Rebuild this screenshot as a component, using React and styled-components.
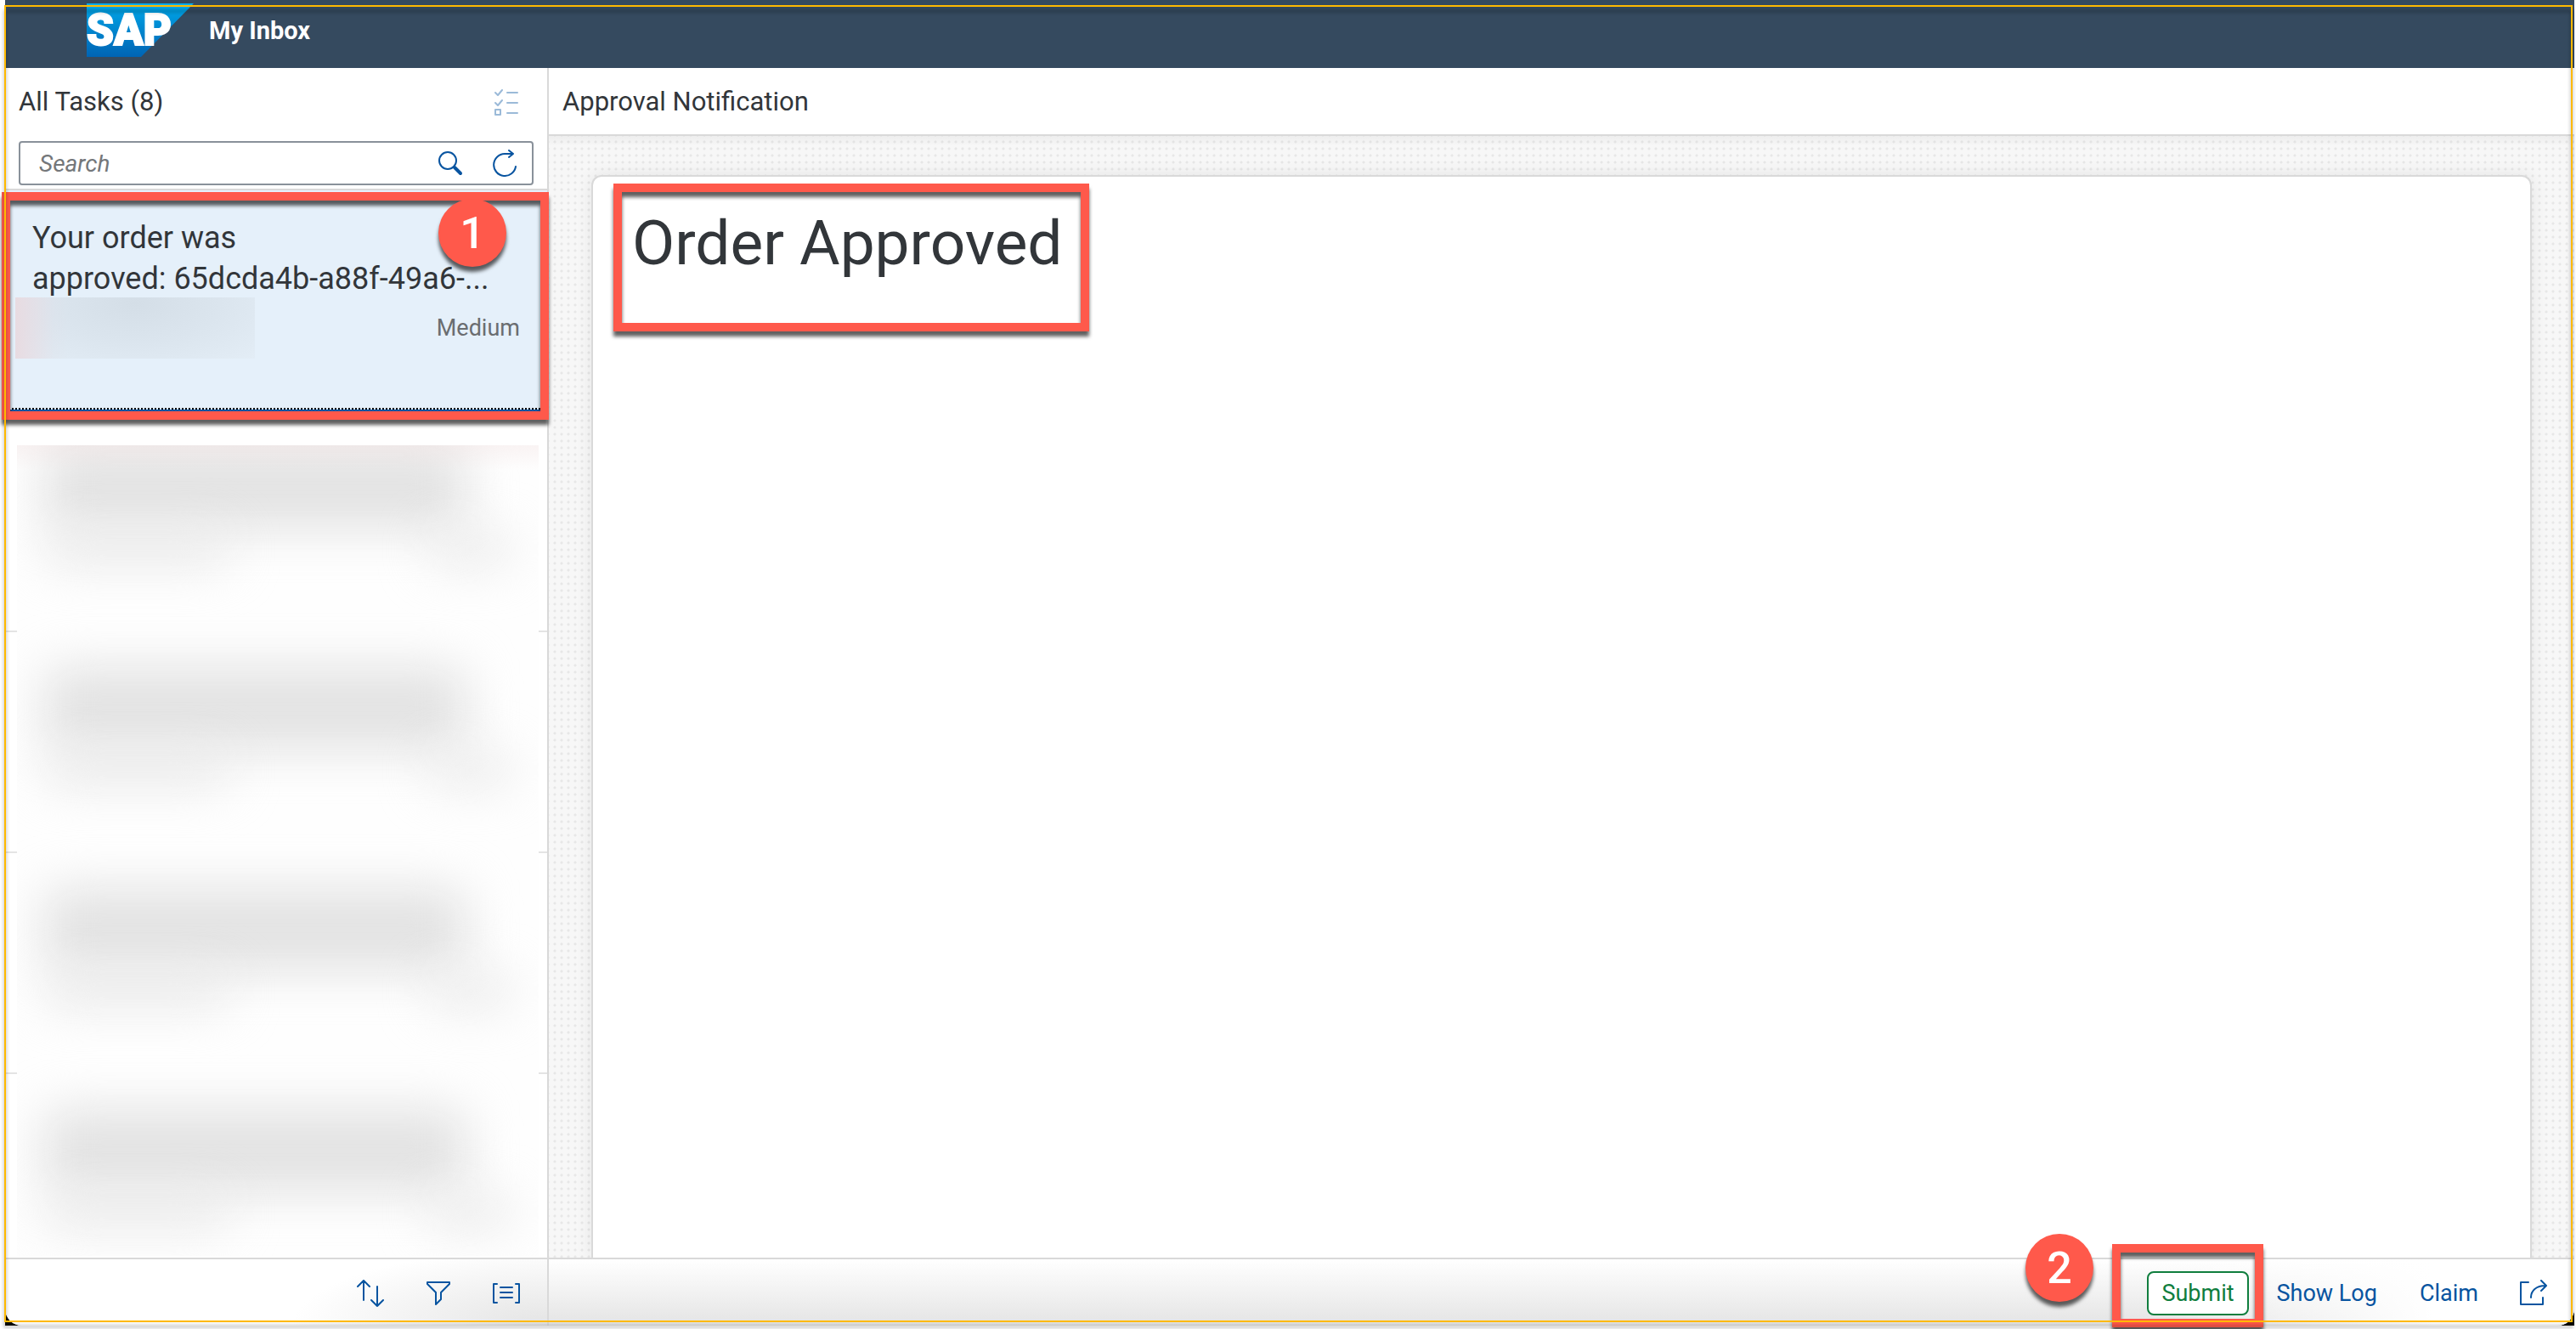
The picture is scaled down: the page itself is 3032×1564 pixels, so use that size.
import React from "react";
import styled, { createGlobalStyle } from "styled-components";

const colors = {
  shell: "#354a5f",
  text: "#32363a",
  muted: "#6a6d70",
  line: "#d9d9d9",
  link: "#0854a0",
  positive: "#107e3e",
  mark: "#ff594b",
  frame: "#ffb900",
};

const Global = createGlobalStyle`
  *, *::before, *::after { box-sizing: border-box; }
  body { margin: 0; background: #fff; }
  h1, h2, p, ul { margin: 0; padding: 0; font-weight: 400; }
  button, input { font: inherit; }
`;

const Page = styled.div`
  position: relative;
  height: 100vh;
  padding: 0 2px 4px 6px;
  display: flex;
  font-family: Roboto, "Liberation Sans", sans-serif;
  color: ${colors.text};
`;

const Backdrop = styled.div`
  flex: 1;
  display: flex;
  min-width: 0;
  background: linear-gradient(#fff 50%, #0a0a05 50%);
`;

const Shell = styled.div`
  flex: 1;
  min-width: 0;
  display: flex;
  flex-direction: column;
  border-radius: 0 0 20px 20px;
  overflow: hidden;
  background: #fff;
`;

const ShellBar = styled.header`
  flex: none;
  height: 80px;
  display: flex;
  align-items: flex-start;
  gap: 18px;
  padding: 4px 96px;
  background: ${colors.shell};
  color: #fff;
`;

const AppTitle = styled.h1`
  font-size: 29px;
  line-height: 64px;
  font-weight: 700;
`;

const Columns = styled.div`
  flex: 1;
  min-height: 0;
  display: flex;
`;

const Master = styled.aside`
  position: relative;
  width: 640px;
  flex: none;
  display: flex;
  flex-direction: column;
  border-right: 2px solid ${colors.line};
`;

const MasterHead = styled.div`
  flex: none;
  height: 144px;
  padding: 0 10px 4px 16px;
  border-bottom: 2px solid ${colors.line};
`;

const MasterTitle = styled.div`
  display: flex;
  justify-content: space-between;
  align-items: center;
  height: 80px;
  margin-bottom: 6px;
  padding-right: 20px;
`;

const Heading = styled.h2`
  font-size: 31px;
  line-height: 80px;
`;

const IconButton = styled.button`
  display: flex;
  align-items: center;
  justify-content: center;
  flex: none;
  width: ${(p) => (p.$wide ? "64px" : "36px")};
  height: 36px;
  padding: 0;
  border: 0;
  background: none;
  color: ${colors.link};
  opacity: ${(p) => (p.disabled ? 0.4 : 1)};
`;

const SearchBox = styled.label`
  display: flex;
  align-items: center;
  gap: 28px;
  height: 52px;
  margin-right: 6px;
  padding: 0 14px 0 22px;
  border: 2px solid #89919a;
  border-radius: 4px;
`;

const SearchInput = styled.input`
  flex: 1;
  min-width: 0;
  padding: 0;
  border: 0;
  outline: 0;
  background: none;
  font-size: 28px;
  color: ${colors.text};
  &::placeholder { color: #74777a; font-style: italic; opacity: 1; }
`;

const TaskList = styled.ul`
  position: relative;
  flex: 1;
  min-height: 0;
  overflow: hidden;
  list-style: none;
`;

const Task = styled.li`
  height: 260px;
  padding: 32px 32px 0;
  border-bottom: 2px solid ${(p) => (p.$selected ? colors.link : "#e4e4e4")};
  background: ${(p) => (p.$selected ? "#e5f0fa" : "#fff")};
  display: flex;
  flex-direction: column;
`;

const SelectedTask = styled(Task)`
  position: relative;
  &::after {
    content: "";
    position: absolute;
    inset: auto 0 0 0;
    border-bottom: 2px dotted #000;
  }
`;

const TaskTitle = styled.p`
  font-size: 36px;
  line-height: 48px;
`;

const TaskMeta = styled.div`
  display: flex;
  justify-content: space-between;
  margin: -2px 0 0 -20px;
`;

const Redacted = styled.div`
  width: 282px;
  height: 72px;
  background:
    linear-gradient(90deg, #e8dbe1, #e0e0e840 16%, transparent 22%),
    radial-gradient(ellipse at 50% 10%, #d4dee7, #dbe5ee 50%, #e3edf6);
`;

const Priority = styled.span`
  font-size: 27px;
  line-height: 72px;
  color: ${colors.muted};
`;

const Veil = styled.div`
  position: absolute;
  inset: 300px 10px 2px 14px;
  overflow: hidden;
  background: #fefefe;
  &::after {
    content: "";
    position: absolute;
    inset: 0 0 auto 0;
    height: 30px;
    background: linear-gradient(#e6c8c833, #e6c8c800);
  }
`;

const Smudge = styled.div`
  height: 260px;
  display: grid;
  grid-template-columns: 370px 1fr;
  grid-template-rows: 100px 36px;
  align-content: start;
  padding: 0 30px 0 30px;
  row-gap: 4px;
`;

const Blot = styled.i`
  grid-column: ${(p) => p.$col};
  justify-self: ${(p) => p.$side || "stretch"};
  width: ${(p) => p.$w};
  border-radius: 24px;
  background: ${(p) => p.$tone};
  filter: blur(28px);
`;

const FooterBar = styled.footer`
  flex: none;
  height: 80px;
  display: flex;
  align-items: center;
  justify-content: flex-end;
  border-top: 2px solid ${colors.line};
`;

const MasterFooter = styled(FooterBar)`
  gap: 44px;
  padding: 2px 30px 0 0;
  background: radial-gradient(ellipse 300px 90px at 100% 100%, #e4e4e4, #fff);
`;

const Detail = styled.main`
  flex: 1;
  min-width: 0;
  display: flex;
  flex-direction: column;
`;

const DetailHead = styled.div`
  flex: none;
  height: 80px;
  padding: 0 16px;
  border-bottom: 2px solid ${colors.line};
`;

const Canvas = styled.div`
  flex: 1;
  min-height: 0;
  display: flex;
  padding: 46px 50px 0;
  overflow: hidden;
  background:
    linear-gradient(#0000000a, transparent 12px),
    radial-gradient(#e7e7e7 1px, transparent 2px) 3px 3px / 8px 8px,
    #f7f7f7;
`;

const Card = styled.section`
  flex: 1;
  border: 2px solid ${colors.line};
  border-bottom: 0;
  border-radius: 12px 12px 0 0;
  background: #fff;
  box-shadow: 0 0 20px #00000014;
  padding: 36px 46px;
`;

const CardTitle = styled.h2`
  font-size: 73px;
  line-height: 84px;
`;

const DetailFooter = styled(FooterBar)`
  gap: 16px;
  padding: 2px 16px 0 0;
  background:
    linear-gradient(90deg, transparent 80%, #fff 93%),
    linear-gradient(#fff, #e4e4e4);
`;

const TextButton = styled.button`
  height: 52px;
  padding: 0 15px;
  border: 2px solid ${(p) => (p.$positive ? colors.positive : "transparent")};
  border-radius: 8px;
  background: ${(p) => (p.$positive ? "#fff" : "none")};
  color: ${(p) => (p.$positive ? colors.positive : colors.link)};
  font-size: 27px;
  line-height: 48px;
  white-space: nowrap;
`;

const Marker = styled.div`
  position: absolute;
  border: 10px solid ${colors.mark};
  filter: drop-shadow(0 6px 2px #000000a0);
  pointer-events: none;
  z-index: 1;
`;

const TaskMarker = styled(Marker)`
  left: 2px;
  top: 226px;
  width: 644px;
  height: 268px;
`;

const TitleMarker = styled(Marker)`
  left: 722px;
  top: 216px;
  width: 560px;
  height: 174px;
`;

const SubmitMarker = styled(Marker)`
  right: 368px;
  bottom: 2px;
  width: 178px;
  height: 98px;
`;

const Step = styled.div`
  position: absolute;
  width: 80px;
  height: 80px;
  border-radius: 50%;
  background: ${colors.mark};
  color: #fff;
  font-size: 52px;
  font-weight: 500;
  line-height: 82px;
  text-align: center;
  box-shadow: 0 6px 4px #000000a0;
  z-index: 2;
`;

const FirstStep = styled(Step)`
  left: 516px;
  top: 234px;
`;

const SecondStep = styled(Step)`
  right: 568px;
  bottom: 32px;
`;

const Outline = styled.div`
  position: absolute;
  inset: 6px 4px 8px 5px;
  border: 2px solid ${colors.frame};
  filter: drop-shadow(0 6px 2px #00000066);
  pointer-events: none;
  z-index: 3;
`;

const Icon = ({ w = 32, h = 32, width = 2, children }) => (
  <svg width={w} height={h} viewBox={`0 0 ${w} ${h}`} fill="none" stroke="currentColor"
    strokeWidth={width} strokeLinecap="round" strokeLinejoin="round" aria-hidden="true">
    {children}
  </svg>
);

const LogoText = styled.text`
  font-size: 51px;
  font-weight: 900;
`;

const Logo = () => (
  <svg width="126" height="63" viewBox="0 0 126 63" role="img" aria-label="SAP">
    <defs>
      <linearGradient id="sap" x1="0" y1="0" x2="0" y2="1">
        <stop offset="0" stopColor="#00aeef" />
        <stop offset="0.25" stopColor="#0097dc" />
        <stop offset="1" stopColor="#0064b4" />
      </linearGradient>
    </defs>
    <path d="M0 0H126L64 63H0Z" fill="url(#sap)" />
    <LogoText x="0" y="49" fill="#fff" stroke="#fff" strokeWidth="2">SAP</LogoText>
  </svg>
);

export default function App() {
  return (
    <Page>
      <Global />
      <Backdrop>
        <Shell>
          <ShellBar>
            <Logo />
            <AppTitle>My Inbox</AppTitle>
          </ShellBar>
          <Columns>
            <Master>
              <MasterHead>
                <MasterTitle>
                  <Heading>All Tasks (8)</Heading>
                  <IconButton disabled aria-label="Multi-select">
                    <Icon>
                      <path d="M3 5l3 3 5-6M3 17l3 3 5-6" />
                      <path d="M3 25h6v6h-6zM17 5h12M17 17h12M17 29h12" />
                    </Icon>
                  </IconButton>
                </MasterTitle>
                <SearchBox>
                  <SearchInput type="text" placeholder="Search" aria-label="Search" />
                  <IconButton aria-label="Find">
                    <Icon>
                      <circle cx="13" cy="13" r="10" />
                      <path d="M21 21l7 7" strokeWidth="4" />
                    </Icon>
                  </IconButton>
                  <IconButton aria-label="Refresh">
                    <Icon>
                      <path d="M29 20A13 13 0 1 1 16 5h9M21 1l5 4-5 4" />
                    </Icon>
                  </IconButton>
                </SearchBox>
              </MasterHead>
              <TaskList>
                <SelectedTask $selected>
                  <TaskTitle>Your order was<br />approved: 65dcda4b-a88f-49a6-...</TaskTitle>
                  <TaskMeta>
                    <Redacted />
                    <Priority>Medium</Priority>
                  </TaskMeta>
                </SelectedTask>
                <Task /><Task /><Task /><Task />
                <Veil>
                  {[0, 1, 2, 3].map((n) => (
                    <Smudge key={n}>
                      <Blot $col="1 / 3" $w="500px" $tone="#e3e3e3" />
                      <Blot $col="1" $w="220px" $tone="#e8e8e8" />
                      <Blot $col="2" $w="100px" $side="end" $tone="#e8e8e8" />
                    </Smudge>
                  ))}
                </Veil>
              </TaskList>
              <MasterFooter>
                <IconButton aria-label="Sort">
                  <Icon>
                    <path d="M8 24V1M1 8l7-7 7 7M24 8v23M17 24l7 7 7-7" />
                  </Icon>
                </IconButton>
                <IconButton aria-label="Filter">
                  <Icon>
                    <path d="M3 3h26v2l-10 10v8l-6 6V15L3 5z" />
                  </Icon>
                </IconButton>
                <IconButton aria-label="Group">
                  <Icon>
                    <path d="M5 5H1v22h4M27 5h4v22h-4M9 9h14M9 15h14M9 21h14" />
                  </Icon>
                </IconButton>
              </MasterFooter>
            </Master>
            <Detail>
              <DetailHead>
                <Heading>Approval Notification</Heading>
              </DetailHead>
              <Canvas>
                <Card>
                  <CardTitle>Order Approved</CardTitle>
                </Card>
              </Canvas>
              <DetailFooter>
                <TextButton $positive>Submit</TextButton>
                <TextButton>Show Log</TextButton>
                <TextButton>Claim</TextButton>
                <IconButton $wide aria-label="Share">
                  <Icon>
                    <path d="M10 3H1v26h26V21M13 21C13 13 19 7 30 7M25 1l6 6-6 6" />
                  </Icon>
                </IconButton>
              </DetailFooter>
            </Detail>
          </Columns>
        </Shell>
      </Backdrop>
      <TaskMarker />
      <TitleMarker />
      <SubmitMarker />
      <FirstStep>1</FirstStep>
      <SecondStep>2</SecondStep>
      <Outline />
    </Page>
  );
}
